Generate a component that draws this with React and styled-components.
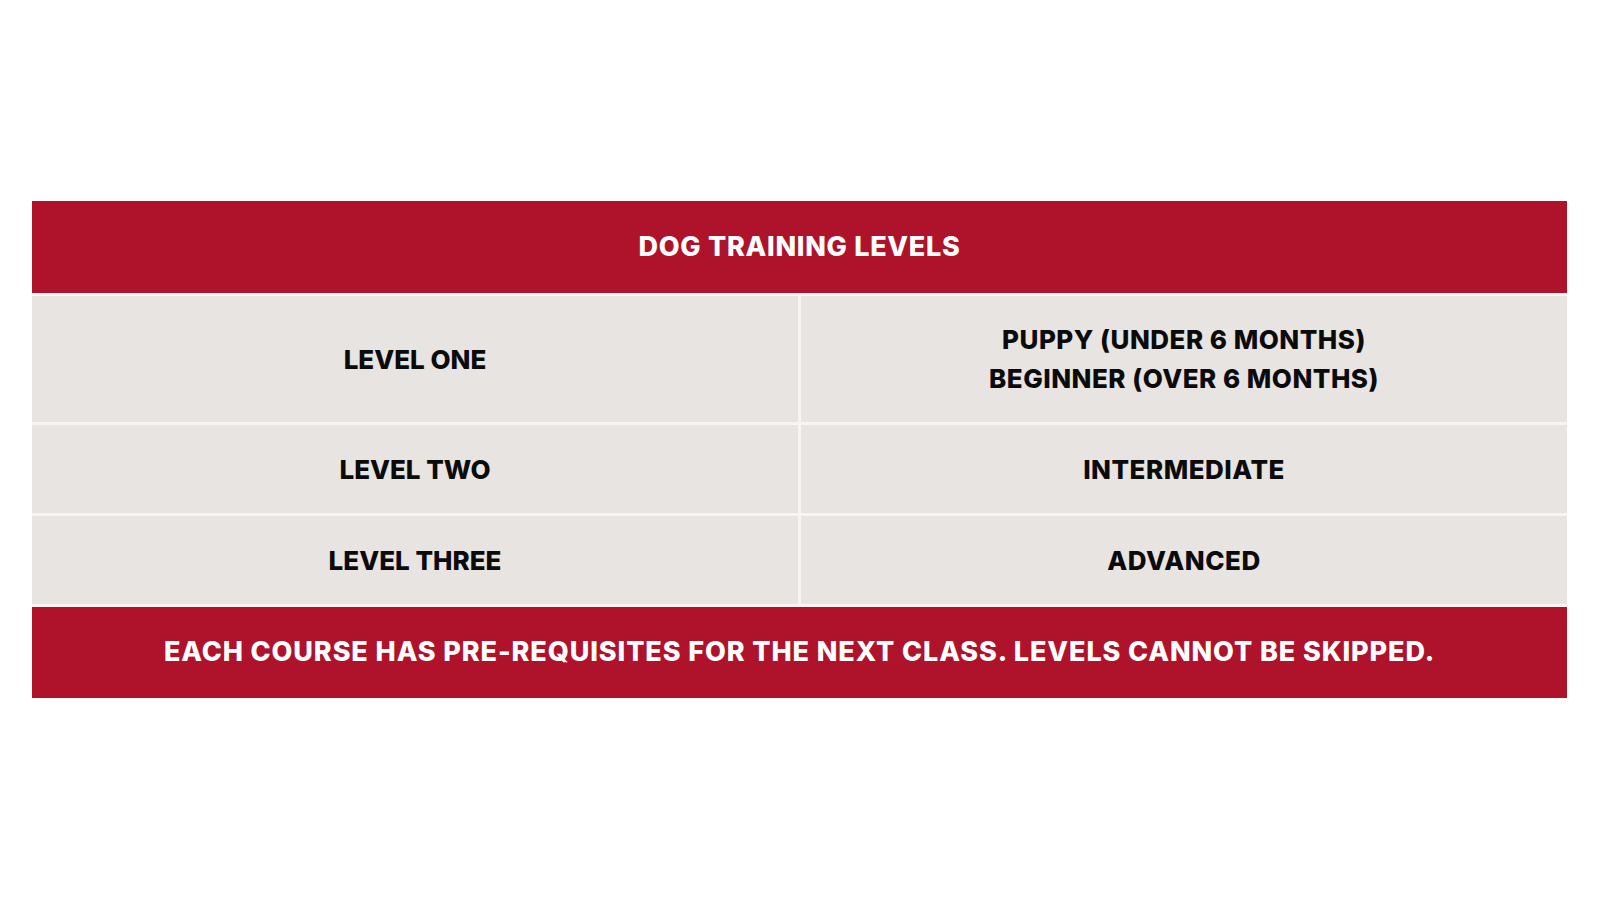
import styled, { createGlobalStyle } from 'styled-components';

const GlobalStyle = createGlobalStyle`
  html, body {
    margin: 0;
    padding: 0;
    background: #ffffff;
  }
  * {
    box-sizing: border-box;
  }
`;

const Page = styled.div`
  width: 1600px;
  height: 900px;
  padding: 201px 33px 0 32px;
  background: #ffffff;
  font-family: 'Inter', 'Noto Sans', sans-serif;
`;

const Table = styled.div`
  display: grid;
  grid-template-columns: 1fr 1fr;
  grid-template-rows: 92px 126px 88px 88px 91px;
  gap: 3px;
  background: #f7f5f2;
`;

const Banner = styled.div`
  grid-column: 1 / span 2;
  display: flex;
  align-items: center;
  justify-content: center;
  background: #af122b;
  color: #ffffff;
  font-weight: 800;
  font-size: ${(p) => p.size || 28}px;
  letter-spacing: ${(p) => p.spacing || 0}px;
  padding-bottom: 2px;
`;

const Cell = styled.div`
  display: flex;
  flex-direction: column;
  align-items: center;
  justify-content: center;
  background: #e7e4e1;
  color: #0b0b0b;
  font-weight: 800;
  font-size: 26px;
  line-height: 39px;
  text-align: center;
  letter-spacing: ${(p) => (p.wide ? 0.5 : 0)}px;
`;

const rows = [
  { level: 'LEVEL ONE', names: ['PUPPY (UNDER 6 MONTHS)', 'BEGINNER (OVER 6 MONTHS)'] },
  { level: 'LEVEL TWO', names: ['INTERMEDIATE'] },
  { level: 'LEVEL THREE', names: ['ADVANCED'] }
];

function App() {
  return (
    <>
      <GlobalStyle />
      <Page>
        <Table>
          <Banner size={27} spacing={0.7}>DOG TRAINING LEVELS</Banner>
          {rows.map((row) => (
            <>
              <Cell key={row.level}>{row.level}</Cell>
              <Cell key={row.level + '-names'} wide>
                {row.names.map((n) => (
                  <span key={n}>{n}</span>
                ))}
              </Cell>
            </>
          ))}
          <Banner size={27} spacing={0.9}>
            EACH COURSE HAS PRE-REQUISITES FOR THE NEXT CLASS. LEVELS CANNOT BE SKIPPED.
          </Banner>
        </Table>
      </Page>
    </>
  );
}

export default App;
